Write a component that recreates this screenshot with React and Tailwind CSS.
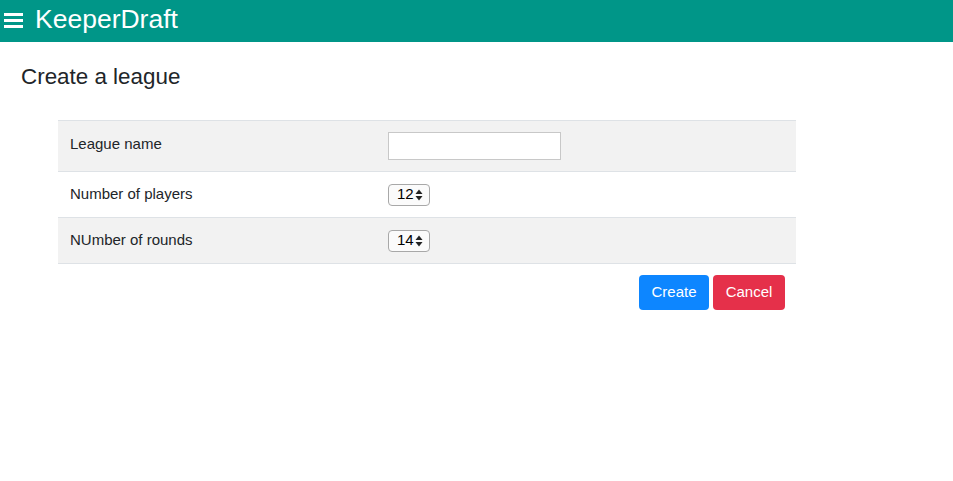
export default function App() {
  const font = { fontFamily: '"Liberation Sans", Arial, sans-serif' };
  return (
    <div className="min-h-[481px] bg-white text-[#212529]" style={font}>
      <header className="h-[42px] bg-[#009688] flex items-center text-white">
        <div className="ml-[4px] flex flex-col gap-[3px] -mt-[2px]">
          <div className="w-[19px] h-[3px] bg-white" />
          <div className="w-[19px] h-[3px] bg-white" />
          <div className="w-[19px] h-[3px] bg-white" />
        </div>
        <span className="ml-[12px] text-[26.5px] leading-none -mt-[4px]">KeeperDraft</span>
      </header>
      <h1 className="ml-[21px] mt-[22px] text-[22.4px] leading-[26px]">Create a league</h1>
      <div className="ml-[58px] mt-[30px] w-[738px]">
        <div className="border-t border-[#dee2e6]">
          <div className="h-[51px] bg-[#f2f2f2] border-b border-[#dee2e6] flex items-center">
            <div className="w-[330px] pl-[12px] text-[15px] -mt-[4px]">League name</div>
            <input type="text" className="w-[173px] h-[28px] bg-white border border-[#c8c8c8] outline-none" />
          </div>
          <div className="h-[46px] bg-white border-b border-[#dee2e6] flex items-center">
            <div className="w-[330px] pl-[12px] text-[15px]">Number of players</div>
            <Select value="12" />
          </div>
          <div className="h-[46px] bg-[#f2f2f2] border-b border-[#dee2e6] flex items-center">
            <div className="w-[330px] pl-[12px] text-[15px]">NUmber of rounds</div>
            <Select value="14" />
          </div>
        </div>
        <div className="flex justify-end gap-[4px] mt-[11px] mr-[11px]">
          <button className="h-[35px] w-[70px] rounded-[4px] bg-[#0d86ff] text-white text-[15px]">Create</button>
          <button className="h-[35px] w-[72px] rounded-[4px] bg-[#e5304a] text-white text-[15px]">Cancel</button>
        </div>
      </div>
    </div>
  );
}

function Select({ value }) {
  return (
    <div className="w-[42px] h-[22px] border border-[#a8a8a8] rounded-[4px] bg-[#fbfbfb] flex items-center pl-[8px] text-[15px] text-black">
      <span>{value}</span>
      <svg width="8" height="14" viewBox="0 0 8 14" className="ml-[1px]">
        <path d="M4 1.5 L7.5 6 L0.5 6 Z" fill="#222" />
        <path d="M4 12.5 L7.5 8 L0.5 8 Z" fill="#222" />
      </svg>
    </div>
  );
}
